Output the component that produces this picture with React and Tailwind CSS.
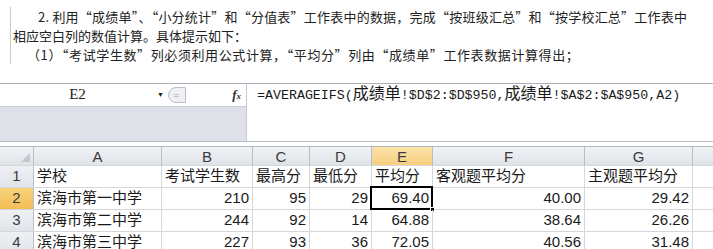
import React from "react";

const cols = [
  { key: "A", w: "w-[128px]" },
  { key: "B", w: "w-[91px]" },
  { key: "C", w: "w-[57px]" },
  { key: "D", w: "w-[62px]" },
  { key: "E", w: "w-[61px]" },
  { key: "F", w: "w-[152px]" },
  { key: "G", w: "w-[108px]" },
];

const rows = [
  ["学校", "考试学生数", "最高分", "最低分", "平均分", "客观题平均分", "主观题平均分"],
  ["滨海市第一中学", "210", "95", "29", "69.40", "40.00", "29.42"],
  ["滨海市第二中学", "244", "92", "14", "64.88", "38.64", "26.26"],
  ["滨海市第三中学", "227", "93", "36", "72.05", "40.56", "31.48"],
];

function Mono({ children }) {
  return <span className="font-['Liberation_Mono',monospace] text-[13.3px]">{children}</span>;
}

function Cjk({ children }) {
  return <span className="font-['Noto_Sans_CJK_SC',sans-serif] text-[16px]">{children}</span>;
}

export default function App() {
  return (
    <div className="w-[713px] h-[249px] overflow-hidden bg-white text-[#1a1a1a]">
      {/* instructions */}
      <div className="pt-[7px] pl-[10px] h-[83px]">
        <div className="border-l border-[#c8c8c8] pl-[2px] font-['Noto_Sans_CJK_SC',sans-serif] text-[13px] leading-[19px] text-[#222]">
          <p className="indent-[25px] whitespace-nowrap tracking-[0.22px]">2. 利用“成绩单”、“小分统计”和“分值表”工作表中的数据，完成“按班级汇总”和“按学校汇总”工作表中</p>
          <p className="whitespace-nowrap">相应空白列的数值计算。具体提示如下：</p>
          <p className="indent-[14px] whitespace-nowrap tracking-[0.6px]">（1）“考试学生数”列必须利用公式计算，“平均分”列由“成绩单”工作表数据计算得出；</p>
        </div>
      </div>

      {/* formula bar */}
      <div className="flex border-t border-[#a9b1bc] h-[59px] border-b border-b-[#b7bec8]">
        <div className="w-[247px] flex flex-col border-r border-[#c5cad2]">
          <div className="h-[22px] bg-white flex items-center">
            <span className="w-[155px] text-center font-['Liberation_Serif',serif] text-[15px] leading-none -mt-[2px]">E2</span>
            <span className="text-[7px] ml-[2px] text-[#222]">▼</span>
            <div className="ml-[4px] w-[18px] h-[16px] rounded-l-full border border-[#b9c0c9] bg-[#eef0f3] flex items-center justify-center">
              <span className="w-[5px] h-[3px] border-t border-b border-[#c0c4ca]"></span>
            </div>
            <span className="ml-auto mr-[5px] font-['Liberation_Serif',serif] italic font-bold text-[13px] text-[#333]">
              f<span className="text-[9px]">x</span>
            </span>
          </div>
          <div className="flex-1 bg-[#dee2e8] border-t border-[#c9ced6]"></div>
        </div>
        <div className="flex-1">
          <div className="h-[19px] pl-[10px] flex items-center whitespace-nowrap">
            <span className="leading-[16px]">
              <Mono>=AVERAGEIFS(</Mono>
              <Cjk>成绩单</Cjk>
              <Mono>!$D$2:$D$950,</Mono>
              <Cjk>成绩单</Cjk>
              <Mono>!$A$2:$A$950,A2)</Mono>
            </span>
          </div>
        </div>
      </div>

      <div className="h-[4px] bg-white"></div>

      {/* sheet */}
      <div className="font-['Liberation_Sans','Noto_Sans_CJK_SC',sans-serif] text-[15px]">
        <div className="flex h-[19px] border-t border-[#b2b8c1] bg-gradient-to-b from-[#f1f3f6] to-[#dfe3e8] text-[#3b3b3b]">
          <div className="w-[34px] border-r border-[#b8bec7] relative">
            <span className="absolute right-[3px] bottom-[3px] w-0 h-0 border-l-[9px] border-l-transparent border-b-[9px] border-b-[#c3c8cf]"></span>
          </div>
          {cols.map((c) => (
            <div
              key={c.key}
              className={`${c.w} border-r border-[#b8bec7] flex items-center justify-center leading-none ${
                c.key === "E" ? "bg-gradient-to-b from-[#fbe3a9] to-[#f6cf7e]" : ""
              }`}
            >
              {c.key}
            </div>
          ))}
          <div className="flex-1"></div>
        </div>
        {rows.map((r, i) => (
          <div key={i} className="flex h-[22px] border-t border-[#d4d7db]">
            <div
              className={`w-[34px] border-r border-[#b8bec7] flex items-center justify-center text-[#3b3b3b] ${
                i === 1 ? "bg-gradient-to-b from-[#f8d17a] to-[#f2bf55]" : "bg-gradient-to-b from-[#eef0f3] to-[#e1e5ea]"
              }`}
            >
              {i + 1}
            </div>
            {cols.map((c, j) => {
              const num = i > 0 && j > 0;
              const sel = i === 1 && c.key === "E";
              return (
                <div
                  key={c.key}
                  className={`${c.w} border-r border-[#d4d7db] flex items-center px-[3px] whitespace-nowrap relative ${
                    num ? "justify-end" : "justify-start"
                  }`}
                >
                  {r[j]}
                  {sel && (
                    <span className="absolute -left-[2px] -top-[2px] -right-[1px] -bottom-[1px] border-2 border-black">
                      <span className="absolute -right-[4px] -bottom-[4px] w-[5px] h-[5px] bg-black border border-white"></span>
                    </span>
                  )}
                </div>
              );
            })}
            <div className="flex-1"></div>
          </div>
        ))}
      </div>
    </div>
  );
}
